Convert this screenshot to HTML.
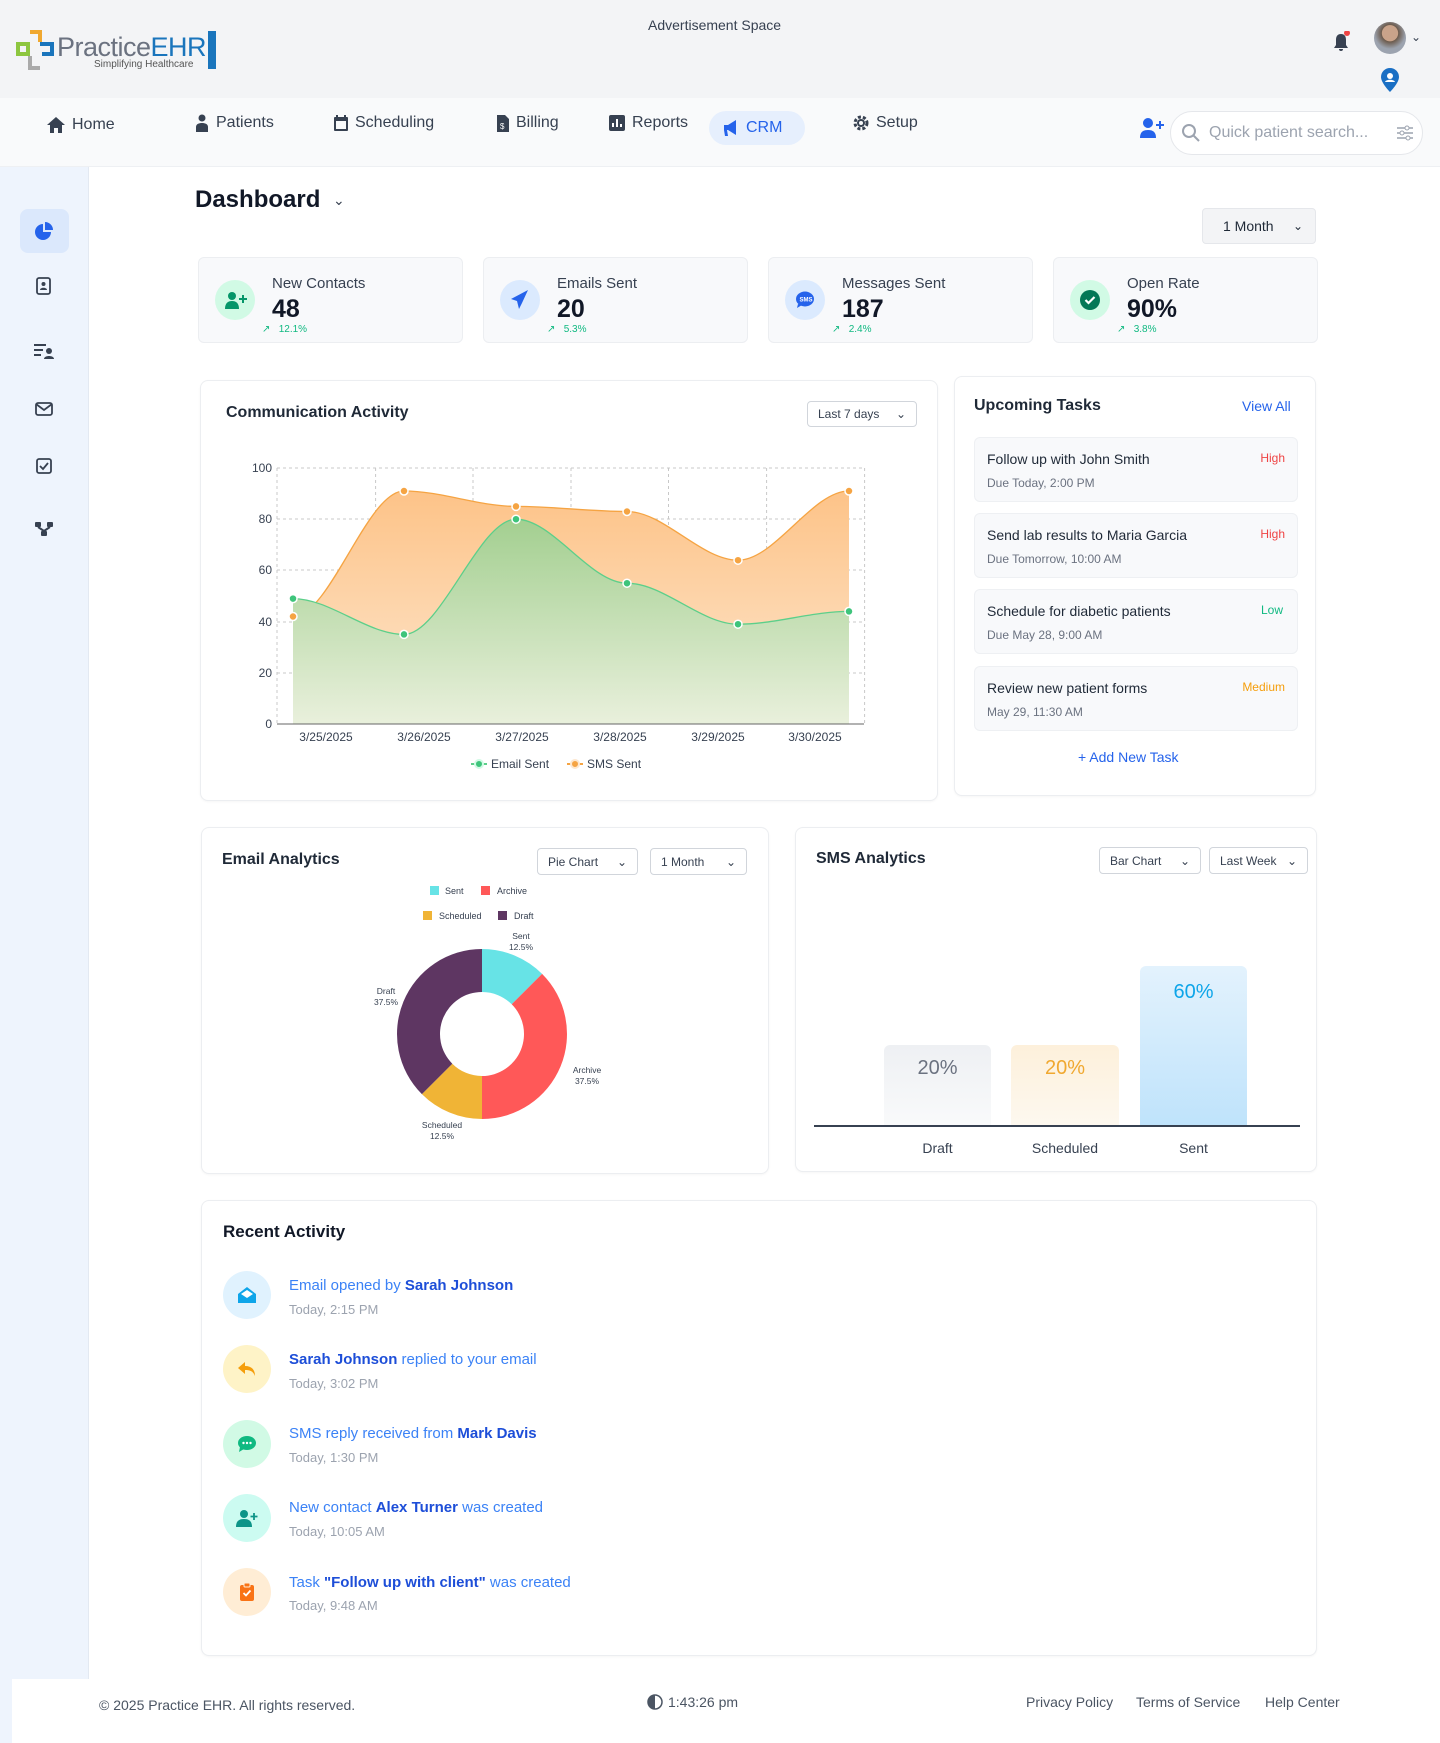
<!DOCTYPE html>
<html><head><meta charset="utf-8"><style>
*{box-sizing:border-box;margin:0;padding:0}
body{width:1440px;height:1743px;position:relative;font-family:"Liberation Sans",sans-serif;background:#fff;color:#111827;overflow:hidden}
.a{position:absolute}
.card{position:absolute;background:#fff;border:1px solid #eceef1;border-radius:8px;box-shadow:0 1px 2px rgba(0,0,0,.04)}
.stat{position:absolute;background:#f8f9fb;border:1px solid #eceef1;border-radius:6px;top:257px;height:86px;width:265px}
.stat .ic{position:absolute;left:16px;top:22px;width:40px;height:40px;border-radius:50%}
.stat .lb{position:absolute;left:73px;top:17px;font-size:15px;color:#374151}
.stat .nm{position:absolute;left:73px;top:37px;font-size:25px;font-weight:bold;color:#111827}
.stat .tr{position:absolute;left:63px;top:66px;font-size:10px;color:#10b981}
.dd{position:absolute;border:1px solid #d1d5db;border-radius:4px;font-size:12px;color:#374151;padding:0 10px;display:flex;align-items:center;justify-content:space-between;background:#fff}
.task{position:absolute;left:974px;width:324px;height:65px;background:#f8f9fb;border:1px solid #eef0f3;border-radius:6px}
.task .t{position:absolute;left:12px;top:13px;font-size:14px;color:#1f2937}
.task .d{position:absolute;left:12px;top:38px;font-size:12px;color:#6b7280}
.task .p{position:absolute;right:12px;top:13px;font-size:12px}
.nav{position:absolute;top:116px;font-size:16px;color:#374151;display:flex;align-items:center;gap:7px}
.act .c{position:absolute;left:223px;width:48px;height:48px;border-radius:50%;display:flex;align-items:center;justify-content:center}
.act .t1{position:absolute;left:289px;font-size:15px;color:#3b82f6}
.act .t1 b{color:#1d4ed8}
.act .t2{position:absolute;left:289px;font-size:13px;color:#9ca3af}
</style></head><body>
<!-- header -->
<div class="a" style="left:0;top:0;width:1440px;height:98px;background:#f3f4f6"></div>
<svg class="a" style="left:16px;top:30px" width="40" height="40" viewBox="0 0 40 40"><path d="M14 2h10v10" fill="none" stroke="#f0a830" stroke-width="4"/><path d="M2 14h10v10H2z" fill="none" stroke="#8dc63f" stroke-width="4"/><path d="M14 26v12h10" fill="none" stroke="#aaa" stroke-width="4"/><path d="M24 14h12v10H26" fill="none" stroke="#1a75bc" stroke-width="4"/></svg>
<div class="a" style="left:57px;top:32px;font-size:27px;color:#6b7280;letter-spacing:-0.5px">Practice<span style="color:#1a75bc">EHR</span></div>
<div class="a" style="left:94px;top:59px;font-size:10px;color:#555">Simplifying Healthcare</div>
<div class="a" style="left:208px;top:31px;width:8px;height:38px;background:#1a75bc"></div>
<div class="a" style="left:648px;top:17px;font-size:14px;color:#374151">Advertisement Space</div>
<svg class="a" style="left:1331px;top:31px" width="20" height="22" viewBox="0 0 20 22"><path d="M10 3c-4 0-5 3-5 6v5l-2 3h14l-2-3V9c0-3-1-6-5-6zM8 18h4a2 2 0 01-4 0z" fill="#374151"/><circle cx="16" cy="2" r="3" fill="#ef4444"/></svg>
<div class="a" style="left:1374px;top:22px;width:32px;height:32px;border-radius:50%;background:radial-gradient(circle at 50% 35%,#c9a38a 0 30%,#6b5a4c 32%,#9ca3af 60%)"></div>
<div class="a" style="left:1411px;top:30px;font-size:12px;color:#374151">⌄</div>
<svg class="a" style="left:1381px;top:68px" width="18" height="24" viewBox="0 0 18 24"><path d="M9 0a9 9 0 019 9c0 6-9 15-9 15S0 15 0 9a9 9 0 019-9z" fill="#1a6fc4"/><circle cx="9" cy="8" r="3" fill="#fff"/><path d="M4 14c1-3 9-3 10 0" fill="#fff"/></svg>
<!-- nav -->
<div class="a" style="left:0;top:98px;width:1440px;height:69px;background:#f9fafb;border-bottom:1px solid #eef0f3"></div>
<div class="nav" style="left:47px"><svg width="18" height="16" viewBox="0 0 18 16"><path d="M9 0L0 8h3v8h4v-5h4v5h4V8h3z" fill="#374151"/></svg>Home</div>
<div class="nav" style="left:195px;top:114px"><svg width="14" height="18" viewBox="0 0 14 18"><circle cx="7" cy="4" r="3.5" fill="#374151"/><path d="M1 18v-5c0-3 3-4 6-4s6 1 6 4v5z" fill="#374151"/></svg>Patients</div>
<div class="nav" style="left:334px;top:114px"><svg width="14" height="16" viewBox="0 0 14 16"><rect x="0" y="2" width="14" height="14" rx="1" fill="#374151"/><rect x="2" y="6" width="10" height="8" fill="#f9fafb"/><path d="M3 0v4M11 0v4" stroke="#374151" stroke-width="2"/></svg>Scheduling</div>
<div class="nav" style="left:497px;top:114px"><svg width="12" height="17" viewBox="0 0 12 17"><path d="M0 0h8l4 4v13H0z" fill="#374151"/><text x="3" y="14" font-size="8" fill="#fff">$</text></svg>Billing</div>
<div class="nav" style="left:609px;top:114px"><svg width="16" height="16" viewBox="0 0 16 16"><rect width="16" height="16" rx="2" fill="#374151"/><path d="M4 12V8M8 12V4M12 12V9" stroke="#fff" stroke-width="2"/></svg>Reports</div>
<div class="a" style="left:709px;top:111px;width:96px;height:34px;border-radius:17px;background:#e6effd"></div>
<div class="nav" style="left:722px;top:119px;color:#2563eb"><svg width="17" height="16" viewBox="0 0 17 16"><path d="M2 5h4l8-5v15l-8-5H5l1 6H3L2 10z" fill="#2563eb"/></svg>CRM</div>
<div class="nav" style="left:853px;top:114px"><svg width="16" height="16" viewBox="0 0 16 16"><circle cx="8" cy="8" r="6" fill="none" stroke="#374151" stroke-width="3" stroke-dasharray="3 2"/><circle cx="8" cy="8" r="4" fill="#374151"/><circle cx="8" cy="8" r="2" fill="#f9fafb"/></svg>Setup</div>
<svg class="a" style="left:1140px;top:118px" width="24" height="20" viewBox="0 0 24 20"><circle cx="8" cy="5" r="5" fill="#2563eb"/><path d="M0 20c0-6 3-8 8-8s8 2 8 8z" fill="#2563eb"/><path d="M20 3v8M16 7h8" stroke="#2563eb" stroke-width="2"/></svg>
<div class="a" style="left:1170px;top:111px;width:253px;height:44px;border:1px solid #e5e7eb;border-radius:22px;background:#fff"></div>
<svg class="a" style="left:1182px;top:124px" width="18" height="18" viewBox="0 0 18 18"><circle cx="7" cy="7" r="6" fill="none" stroke="#9ca3af" stroke-width="2"/><path d="M11.5 11.5L17 17" stroke="#9ca3af" stroke-width="2"/></svg>
<div class="a" style="left:1209px;top:124px;font-size:16px;color:#9ca3af">Quick patient search...</div>
<svg class="a" style="left:1397px;top:125px" width="16" height="16" viewBox="0 0 16 16"><path d="M0 3h16M0 8h16M0 13h16" stroke="#9ca3af" stroke-width="1.5"/><circle cx="10" cy="3" r="2" fill="#fff" stroke="#9ca3af"/><circle cx="5" cy="8" r="2" fill="#fff" stroke="#9ca3af"/><circle cx="11" cy="13" r="2" fill="#fff" stroke="#9ca3af"/></svg>
<!-- sidebar -->
<div class="a" style="left:0;top:167px;width:89px;height:1512px;background:#eef4fd;border-right:1px solid #e3e9f2"></div>
<div class="a" style="left:20px;top:209px;width:49px;height:44px;border-radius:8px;background:#dbe8fc"></div>
<svg class="a" style="left:35px;top:222px" width="18" height="18" viewBox="0 0 18 18"><path d="M8 2a8 8 0 108 8H8z" fill="#2563eb"/><path d="M10 0v8h8a8 8 0 00-8-8z" fill="#2563eb"/></svg>
<svg class="a" style="left:36px;top:277px" width="16" height="18" viewBox="0 0 16 18"><rect x="1" y="1" width="13" height="16" rx="2" fill="none" stroke="#374151" stroke-width="1.8"/><circle cx="7.5" cy="7" r="2" fill="#374151"/><path d="M4 13c0-3 7-3 7 0z" fill="#374151"/></svg>
<svg class="a" style="left:34px;top:343px" width="20" height="16" viewBox="0 0 20 16"><path d="M0 2h12M0 7h9M0 12h7" stroke="#374151" stroke-width="2"/><circle cx="15" cy="8" r="3" fill="#374151"/><path d="M10 16c0-4 10-4 10 0z" fill="#374151"/></svg>
<svg class="a" style="left:35px;top:402px" width="18" height="14" viewBox="0 0 18 14"><rect x="1" y="1" width="16" height="12" rx="2" fill="none" stroke="#374151" stroke-width="1.8"/><path d="M1 2l8 6 8-6" fill="none" stroke="#374151" stroke-width="1.8"/></svg>
<svg class="a" style="left:36px;top:458px" width="16" height="16" viewBox="0 0 16 16"><rect x="1" y="1" width="14" height="14" rx="2" fill="none" stroke="#374151" stroke-width="1.8"/><path d="M4 8l3 3 5-6" fill="none" stroke="#374151" stroke-width="1.8"/></svg>
<svg class="a" style="left:35px;top:521px" width="18" height="16" viewBox="0 0 18 16"><rect x="0" y="1" width="6" height="5" rx="1" fill="#374151"/><rect x="12" y="1" width="6" height="5" rx="1" fill="#374151"/><rect x="6" y="10" width="6" height="5" rx="1" fill="#374151"/><path d="M3 6l6 4M15 6l-6 4" stroke="#374151" stroke-width="2"/></svg>
<!-- dashboard title -->
<div class="a" style="left:195px;top:186px;font-size:24px;font-weight:bold;color:#111827">Dashboard</div>
<div class="a" style="left:333px;top:192px;font-size:14px;color:#374151">⌄</div>
<div class="dd" style="left:1202px;top:208px;width:114px;height:36px;background:#f3f4f6;border-color:#e5e7eb;font-size:14px;color:#1f2937;padding:0 12px 0 20px">1 Month<span style="font-size:12px">⌄</span></div>
<!-- stats -->
<div class="stat" style="left:198px"><div class="ic" style="background:#d1fae5"></div><svg class="a" style="left:26px;top:33px" width="22" height="18" viewBox="0 0 22 18"><circle cx="7" cy="5" r="4" fill="#059669"/><path d="M0 18c0-6 3-8 7-8s7 2 7 8z" fill="#059669"/><path d="M18 4v8M14 8h8" stroke="#059669" stroke-width="2"/></svg><div class="lb">New Contacts</div><div class="nm">48</div><div class="tr">↗ &nbsp;&nbsp;12.1%</div></div>
<div class="stat" style="left:483px"><div class="ic" style="background:#dbeafe"></div><svg class="a" style="left:27px;top:32px" width="18" height="20" viewBox="0 0 18 20"><path d="M17 0L0 9l6 2 2 8 3-6 6-13z" fill="#2563eb"/></svg><div class="lb">Emails Sent</div><div class="nm">20</div><div class="tr">↗ &nbsp;&nbsp;5.3%</div></div>
<div class="stat" style="left:768px"><div class="ic" style="background:#dbeafe"></div><svg class="a" style="left:26px;top:33px" width="20" height="18" viewBox="0 0 20 18"><ellipse cx="10" cy="8" rx="9" ry="7.5" fill="#2563eb"/><path d="M3 13l-1 4 5-3z" fill="#2563eb"/><text x="4.5" y="10.5" font-size="6" fill="#fff" font-weight="bold">SMS</text></svg><div class="lb">Messages Sent</div><div class="nm">187</div><div class="tr">↗ &nbsp;&nbsp;2.4%</div></div>
<div class="stat" style="left:1053px"><div class="ic" style="background:#d1fae5"></div><svg class="a" style="left:26px;top:32px" width="20" height="20" viewBox="0 0 20 20"><circle cx="10" cy="10" r="10" fill="#047857"/><path d="M5.5 10l3 3 6-6" fill="none" stroke="#fff" stroke-width="2.2"/></svg><div class="lb">Open Rate</div><div class="nm">90%</div><div class="tr">↗ &nbsp;&nbsp;3.8%</div></div>
<!-- communication activity -->
<div class="card" style="left:200px;top:380px;width:738px;height:421px"></div>
<div class="a" style="left:226px;top:404px;font-size:16px;font-weight:bold;color:#1f2937">Communication Activity</div>
<div class="dd" style="left:807px;top:401px;width:110px;height:26px">Last 7 days<span>⌄</span></div>
<svg class="a" style="left:0;top:0" width="1440" height="800" viewBox="0 0 1440 800">
<defs>
<linearGradient id="go" x1="0" y1="0" x2="0" y2="1"><stop offset="0" stop-color="#fdc388"/><stop offset="1" stop-color="#fde7cf"/></linearGradient>
<linearGradient id="gg" x1="0" y1="0" x2="0" y2="1"><stop offset="0" stop-color="#a3cf90"/><stop offset="1" stop-color="#e9f0dc"/></linearGradient>
</defs>
<g stroke="#c8c8c8" stroke-dasharray="3 3" stroke-width="1">
<path d="M277 468H864M277 519H864M277 570H864M277 622H864M277 673H864"/>
<path d="M277 468V724M375.6 468V724M473 468V724M571 468V724M668.5 468V724M766.6 468V724M864.6 468V724"/>
</g>
<path d="M293,616.5 C330,616.5 367,491 404,491 C441,491 479,506.4 516,506.4 C553,506.4 590,511.5 627,511.5 C664,511.5 701,560.2 738,560.2 C775,560.2 812,491 849,491 L849,724 L293,724Z" fill="url(#go)"/>
<path d="M293,616.5 C330,616.5 367,491 404,491 C441,491 479,506.4 516,506.4 C553,506.4 590,511.5 627,511.5 C664,511.5 701,560.2 738,560.2 C775,560.2 812,491 849,491" fill="none" stroke="#f5a443" stroke-width="1.3"/>
<path d="M293,598.6 C330,598.6 367,634.4 404,634.4 C441,634.4 479,519.2 516,519.2 C553,519.2 590,583.2 627,583.2 C664,583.2 701,624.2 738,624.2 C775,624.2 812,611.4 849,611.4 L849,724 L293,724Z" fill="url(#gg)"/>
<path d="M293,598.6 C330,598.6 367,634.4 404,634.4 C441,634.4 479,519.2 516,519.2 C553,519.2 590,583.2 627,583.2 C664,583.2 701,624.2 738,624.2 C775,624.2 812,611.4 849,611.4" fill="none" stroke="#5ccf8a" stroke-width="1.3"/>
<g fill="#f5a443" stroke="#fff" stroke-width="1.5"><circle cx="293" cy="616.5" r="4"/><circle cx="404" cy="491" r="4"/><circle cx="516" cy="506.4" r="4"/><circle cx="627" cy="511.5" r="4"/><circle cx="738" cy="560.2" r="4"/><circle cx="849" cy="491" r="4"/></g>
<g fill="#3ec47b" stroke="#fff" stroke-width="1.5"><circle cx="293" cy="598.6" r="4"/><circle cx="404" cy="634.4" r="4"/><circle cx="516" cy="519.2" r="4"/><circle cx="627" cy="583.2" r="4"/><circle cx="738" cy="624.2" r="4"/><circle cx="849" cy="611.4" r="4"/></g>
<path d="M277 724H864" stroke="#666" stroke-width="1"/>
<g font-family="Liberation Sans" font-size="12" fill="#374151" text-anchor="end"><text x="272" y="472">100</text><text x="272" y="523">80</text><text x="272" y="574">60</text><text x="272" y="626">40</text><text x="272" y="677">20</text><text x="272" y="728">0</text></g>
<g font-family="Liberation Sans" font-size="12" fill="#374151" text-anchor="middle"><text x="326" y="741">3/25/2025</text><text x="424" y="741">3/26/2025</text><text x="522" y="741">3/27/2025</text><text x="620" y="741">3/28/2025</text><text x="718" y="741">3/29/2025</text><text x="815" y="741">3/30/2025</text></g>
<path d="M471 764h16" stroke="#5ccf8a" stroke-width="2"/><circle cx="479" cy="764" r="4" fill="#3ec47b" stroke="#d1fae5" stroke-width="2"/>
<text x="491" y="768" font-family="Liberation Sans" font-size="12" fill="#374151">Email Sent</text>
<path d="M567 764h16" stroke="#f5a443" stroke-width="2"/><circle cx="575" cy="764" r="4" fill="#f5a443" stroke="#fde7cf" stroke-width="2"/>
<text x="587" y="768" font-family="Liberation Sans" font-size="12" fill="#374151">SMS Sent</text>
</svg>
<!-- tasks -->
<div class="card" style="left:954px;top:376px;width:362px;height:420px"></div>
<div class="a" style="left:974px;top:397px;font-size:16px;font-weight:bold;color:#1f2937">Upcoming Tasks</div>
<div class="a" style="left:1242px;top:398px;font-size:14px;color:#2563eb">View All</div>
<div class="task" style="top:437px"><div class="t">Follow up with John Smith</div><div class="d">Due Today, 2:00 PM</div><div class="p" style="color:#ef4444">High</div></div>
<div class="task" style="top:513px"><div class="t">Send lab results to Maria Garcia</div><div class="d">Due Tomorrow, 10:00 AM</div><div class="p" style="color:#ef4444">High</div></div>
<div class="task" style="top:589px"><div class="t">Schedule for diabetic patients</div><div class="d">Due May 28, 9:00 AM</div><div class="p" style="color:#10b981;right:14px">Low</div></div>
<div class="task" style="top:666px"><div class="t">Review new patient forms</div><div class="d">May 29, 11:30 AM</div><div class="p" style="color:#f59e0b">Medium</div></div>
<div class="a" style="left:1078px;top:749px;font-size:14px;color:#2563eb">+ Add New Task</div>
<!-- email analytics -->
<div class="card" style="left:201px;top:827px;width:568px;height:347px"></div>
<div class="a" style="left:222px;top:851px;font-size:16px;font-weight:bold;color:#1f2937">Email Analytics</div>
<div class="dd" style="left:537px;top:848px;width:101px;height:27px">Pie Chart<span>⌄</span></div>
<div class="dd" style="left:650px;top:848px;width:97px;height:27px">1 Month<span>⌄</span></div>
<svg class="a" style="left:360px;top:880px" width="260" height="270" viewBox="360 880 260 270">
<g font-family="Liberation Sans" font-size="9" fill="#374151">
<rect x="430" y="886" width="9" height="9" fill="#67e3e6"/><text x="445" y="894">Sent</text>
<rect x="481" y="886" width="9" height="9" fill="#ff5858"/><text x="497" y="894">Archive</text>
<rect x="423" y="911" width="9" height="9" fill="#f0b436"/><text x="439" y="919">Scheduled</text>
<rect x="498" y="911" width="9" height="9" fill="#5e3662"/><text x="514" y="919">Draft</text>
</g>
<path d="M482 949 A85 85 0 0 1 542.1 973.9 L511.7 1004.3 A42 42 0 0 0 482 992Z" fill="#67e3e6"/>
<path d="M542.1 973.9 A85 85 0 0 1 482 1119 L482 1076 A42 42 0 0 0 511.7 1004.3Z" fill="#ff5858"/>
<path d="M482 1119 A85 85 0 0 1 421.9 1094.1 L452.3 1063.7 A42 42 0 0 0 482 1076Z" fill="#f0b436"/>
<path d="M421.9 1094.1 A85 85 0 0 1 482 949 L482 992 A42 42 0 0 0 452.3 1063.7Z" fill="#5e3662"/>
<g font-family="Liberation Sans" font-size="8.5" fill="#374151" text-anchor="middle">
<text x="521" y="939">Sent</text><text x="521" y="950">12.5%</text>
<text x="587" y="1073">Archive</text><text x="587" y="1084">37.5%</text>
<text x="442" y="1128">Scheduled</text><text x="442" y="1139">12.5%</text>
<text x="386" y="994">Draft</text><text x="386" y="1005">37.5%</text>
</g></svg>
<!-- sms analytics -->
<div class="card" style="left:795px;top:827px;width:522px;height:345px"></div>
<div class="a" style="left:816px;top:850px;font-size:16px;font-weight:bold;color:#1f2937">SMS Analytics</div>
<div class="dd" style="left:1099px;top:847px;width:102px;height:27px">Bar Chart<span>⌄</span></div>
<div class="dd" style="left:1209px;top:847px;width:99px;height:27px">Last Week<span>⌄</span></div>
<div class="a" style="left:884px;top:1045px;width:107px;height:80px;border-radius:6px 6px 0 0;background:linear-gradient(#eef0f3,#f9fafb)"></div>
<div class="a" style="left:1011px;top:1045px;width:108px;height:80px;border-radius:6px 6px 0 0;background:linear-gradient(#fdf0db,#fdf8ef)"></div>
<div class="a" style="left:1140px;top:966px;width:107px;height:159px;border-radius:6px 6px 0 0;background:linear-gradient(#e3f2fd,#bfe3fb)"></div>
<div class="a" style="left:884px;top:1057px;width:107px;text-align:center;font-size:20px;color:#6b7280">20%</div>
<div class="a" style="left:1011px;top:1057px;width:108px;text-align:center;font-size:20px;color:#f0a830">20%</div>
<div class="a" style="left:1140px;top:981px;width:107px;text-align:center;font-size:20px;color:#0ea5e9">60%</div>
<div class="a" style="left:814px;top:1125px;width:486px;height:2px;background:#374151"></div>
<div class="a" style="left:884px;top:1140px;width:107px;text-align:center;font-size:14px;color:#374151">Draft</div>
<div class="a" style="left:1011px;top:1140px;width:108px;text-align:center;font-size:14px;color:#374151">Scheduled</div>
<div class="a" style="left:1140px;top:1140px;width:107px;text-align:center;font-size:14px;color:#374151">Sent</div>
<!-- recent activity -->
<div class="card" style="left:201px;top:1200px;width:1116px;height:456px"></div>
<div class="a" style="left:223px;top:1222px;font-size:17px;font-weight:bold;color:#111827">Recent Activity</div>
<div class="act">
<div class="c" style="top:1271px;background:#e0f2fe"><svg width="18" height="16" viewBox="0 0 18 16"><path d="M0 7L9 0l9 7v9H0z" fill="#0ea5e9"/><path d="M3 7l6-4 6 4-6 4z" fill="#fff"/></svg></div>
<div class="t1" style="top:1277px">Email opened by <b>Sarah Johnson</b></div><div class="t2" style="top:1302px">Today, 2:15 PM</div>
<div class="c" style="top:1345px;background:#fef3c7"><svg width="18" height="14" viewBox="0 0 18 14"><path d="M7 0L0 6l7 6V8c5 0 8 1 10 6 0-6-3-10-10-10z" fill="#f59e0b"/></svg></div>
<div class="t1" style="top:1351px"><b>Sarah Johnson</b> replied to your email</div><div class="t2" style="top:1376px">Today, 3:02 PM</div>
<div class="c" style="top:1420px;background:#d1fae5"><svg width="18" height="16" viewBox="0 0 18 16"><ellipse cx="9" cy="7" rx="9" ry="7" fill="#10b981"/><path d="M2 11l-1 5 5-3z" fill="#10b981"/><circle cx="5.5" cy="7" r="1.2" fill="#fff"/><circle cx="9" cy="7" r="1.2" fill="#fff"/><circle cx="12.5" cy="7" r="1.2" fill="#fff"/></svg></div>
<div class="t1" style="top:1425px">SMS reply received from <b>Mark Davis</b></div><div class="t2" style="top:1450px">Today, 1:30 PM</div>
<div class="c" style="top:1494px;background:#ccfbf1"><svg width="22" height="18" viewBox="0 0 22 18"><circle cx="8" cy="5" r="4" fill="#0d9488"/><path d="M0 18c0-6 3-8 8-8s8 2 8 8z" fill="#0d9488"/><path d="M18 4v7M14.5 7.5h7" stroke="#0d9488" stroke-width="1.8"/></svg></div>
<div class="t1" style="top:1499px">New contact <b>Alex Turner</b> was created</div><div class="t2" style="top:1524px">Today, 10:05 AM</div>
<div class="c" style="top:1568px;background:#ffedd5"><svg width="14" height="18" viewBox="0 0 14 18"><rect x="0" y="2" width="14" height="16" rx="2" fill="#f97316"/><rect x="4" y="0" width="6" height="4" rx="1" fill="#f97316" stroke="#ffedd5"/><path d="M3.5 10l2.5 2.5 4.5-5" fill="none" stroke="#fff" stroke-width="1.8"/></svg></div>
<div class="t1" style="top:1574px">Task <b>"Follow up with client"</b> was created</div><div class="t2" style="top:1598px">Today, 9:48 AM</div>
</div>
<!-- footer -->
<div class="a" style="left:0;top:1679px;width:1440px;height:64px;background:#fff"></div>
<div class="a" style="left:0;top:1679px;width:12px;height:64px;background:#eef4fd"></div>
<div class="a" style="left:99px;top:1697px;font-size:14px;color:#4b5563">© 2025 Practice EHR. All rights reserved.</div>
<svg class="a" style="left:647px;top:1694px" width="16" height="16" viewBox="0 0 16 16"><circle cx="8" cy="8" r="7" fill="none" stroke="#4b5563" stroke-width="1.5"/><path d="M8 8V1a7 7 0 000 14z" fill="#4b5563"/></svg>
<div class="a" style="left:668px;top:1694px;font-size:14px;color:#4b5563">1:43:26 pm</div>
<div class="a" style="left:1026px;top:1694px;font-size:14px;color:#4b5563">Privacy Policy</div>
<div class="a" style="left:1136px;top:1694px;font-size:14px;color:#4b5563">Terms of Service</div>
<div class="a" style="left:1265px;top:1694px;font-size:14px;color:#4b5563">Help Center</div>
</body></html>
